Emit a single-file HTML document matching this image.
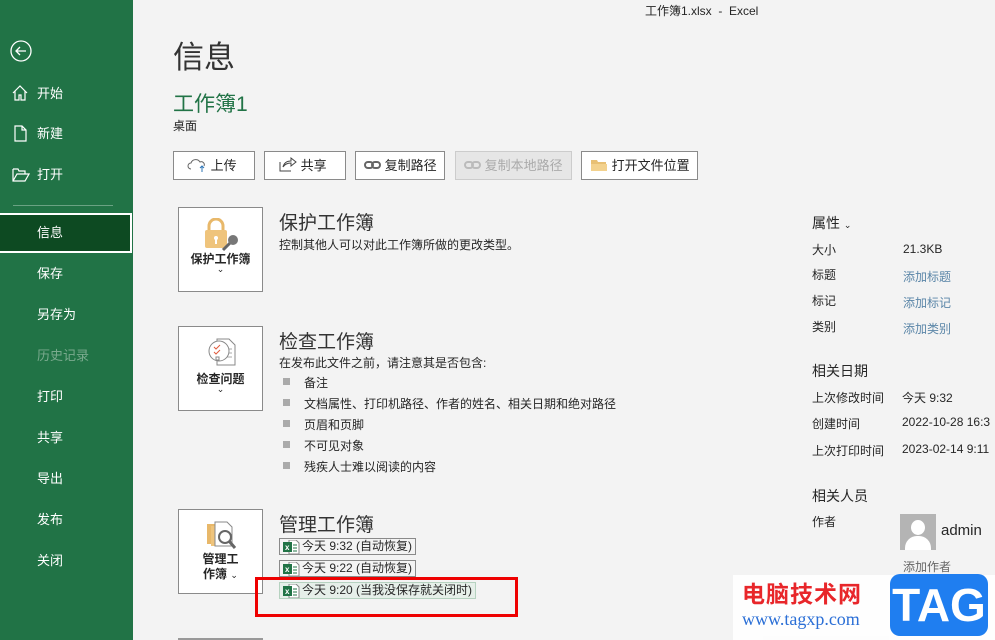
<!DOCTYPE html>
<html><head><meta charset="utf-8"><style>
*{margin:0;padding:0;box-sizing:border-box}
body{width:995px;height:640px;overflow:hidden;background:#f3f3f3;font-family:"Liberation Sans","Noto Sans CJK SC",sans-serif;color:#262626;position:relative}
.side{position:absolute;left:0;top:0;width:133px;height:640px;background:#217346;color:#fff}
.side .it{position:absolute;left:37px;font-size:13px;margin-top:-3px}
.side svg{position:absolute}
.sel{position:absolute;left:0;top:213px;width:132px;height:40px;background:#0d4a22;border:2px solid #fff;border-left:none}
.abs{position:absolute}
.btn{position:absolute;top:151px;height:29px;border:1px solid #8a8a8a;background:#fff;font-size:13px;line-height:27px}
.card{position:absolute;left:178px;width:85px;height:85px;border:1px solid #8a8a8a;background:#fff;text-align:center;font-size:12px;font-weight:bold}
.h2{position:absolute;left:279px;font-size:19px;color:#333}
.t{position:absolute;font-size:12px}
.bul{position:absolute;left:283px;width:7px;height:7px;background:#aaa}
.ver{position:absolute;left:279px;height:17px;border:1px solid #8a8a8a;font-size:12px;line-height:15px;padding-left:22px;padding-right:3px}
.xl{position:absolute;left:2px;top:1px}
.lk{color:#5b86a8}
</style></head><body>
<div class="side">
<svg style="left:10px;top:40px" width="22" height="22" viewBox="0 0 22 22"><circle cx="11" cy="11" r="10" fill="none" stroke="#fff" stroke-width="1.3"/><path d="M16 11H6M10 7l-4 4 4 4" fill="none" stroke="#fff" stroke-width="1.3"/></svg>
<svg style="left:12px;top:85px" width="16" height="16" viewBox="0 0 16 16"><path d="M1 8L8 1l7 7M3 6v9h4v-5h2v5h4V6" fill="none" stroke="#fff" stroke-width="1.2"/></svg>
<div class="it" style="top:86px">开始</div>
<svg style="left:14px;top:125px" width="13" height="17" viewBox="0 0 13 17"><path d="M1 1h7l4 4v11H1z M8 1v4h4" fill="none" stroke="#fff" stroke-width="1.2"/></svg>
<div class="it" style="top:126px">新建</div>
<svg style="left:12px;top:168px" width="18" height="14" viewBox="0 0 18 14"><path d="M1 1h5l1 2h6v3 M1 1v12h12l4-7H5L1 13" fill="none" stroke="#fff" stroke-width="1.2"/></svg>
<div class="it" style="top:167px">打开</div>
<div class="abs" style="left:13px;top:205px;width:100px;height:1px;background:#6aa283"></div>
<div class="sel"></div>
<div class="it" style="top:225px">信息</div>
<div class="it" style="top:266px">保存</div>
<div class="it" style="top:307px">另存为</div>
<div class="it" style="top:348px;color:#7aaa8e">历史记录</div>
<div class="it" style="top:389px">打印</div>
<div class="it" style="top:430px">共享</div>
<div class="it" style="top:471px">导出</div>
<div class="it" style="top:512px">发布</div>
<div class="it" style="top:553px">关闭</div>
</div>
<div class="t" style="left:645px;top:2px;font-size:12px">工作簿1.xlsx &nbsp;-&nbsp; Excel</div>
<div class="abs" style="left:173px;top:32px;font-size:31px;color:#333">信息</div>
<div class="abs" style="left:173px;top:88px;font-size:21px;color:#217346">工作簿1</div>
<div class="t" style="left:173px;top:117px">桌面</div>

<div class="btn" style="left:173px;width:82px;padding-left:13px"><svg width="20" height="14" style="vertical-align:-2px" viewBox="0 0 20 14"><path d="M4 11a3 3 0 010-6 5 5 0 019-1 3 3 0 014 4" fill="none" stroke="#666"/><path d="M15 14V8m-2 2l2-2 2 2" stroke="#2e75b6" fill="none"/></svg> 上传</div>
<div class="btn" style="left:264px;width:82px;padding-left:14px"><svg width="18" height="16" style="vertical-align:-2px" viewBox="0 0 18 16"><path d="M1 6v9h11M4 11c1-4 4-6 8-6V2l5 4-5 4V7c-3 0-6 1-8 4z" fill="none" stroke="#444"/></svg> 共享</div>
<div class="btn" style="left:355px;width:90px;padding-left:8px"><svg width="17" height="10" style="vertical-align:0" viewBox="0 0 17 10"><rect x="1" y="2" width="8" height="6" rx="3" fill="none" stroke="#666" stroke-width="2"/><rect x="8" y="2" width="8" height="6" rx="3" fill="none" stroke="#666" stroke-width="2"/></svg> 复制路径</div>
<div class="btn" style="left:455px;width:117px;padding-left:8px;background:#e6e6e6;border-color:#ccc;color:#aaa"><svg width="17" height="10" viewBox="0 0 17 10"><rect x="1" y="2" width="8" height="6" rx="3" fill="none" stroke="#bbb" stroke-width="2"/><rect x="8" y="2" width="8" height="6" rx="3" fill="none" stroke="#bbb" stroke-width="2"/></svg> 复制本地路径</div>
<div class="btn" style="left:581px;width:117px;padding-left:8px"><svg width="18" height="14" style="vertical-align:-2px" viewBox="0 0 18 14"><path d="M1 2h6l1 2h8v9H1z" fill="#e8c074"/><path d="M1 6h16v7H1z" fill="#f3d28e"/></svg> 打开文件位置</div>

<div class="card" style="top:207px"><svg style="position:absolute;left:24px;top:10px" width="38" height="36" viewBox="0 0 38 36"><path d="M6 12V8a7 7 0 0114 0v4" fill="none" stroke="#e8b86a" stroke-width="3"/><rect x="2" y="12" width="22" height="18" rx="2" fill="#efc47c"/><circle cx="13" cy="20" r="2" fill="#fff"/><rect x="12" y="20" width="2" height="6" fill="#fff"/><path d="M20 32l8-8" stroke="#666" stroke-width="3"/><circle cx="30" cy="22" r="5" fill="#777"/></svg><div class="abs" style="left:0;width:83px;top:42px">保护工作簿</div><div class="abs" style="left:0;width:83px;top:56px;font-size:9px;font-weight:normal">⌄</div></div>
<div class="h2" style="top:208px">保护工作簿</div>
<div class="t" style="left:279px;top:236px">控制其他人可以对此工作簿所做的更改类型。</div>

<div class="card" style="top:326px"><svg style="position:absolute;left:26px;top:10px" width="34" height="30" viewBox="0 0 34 30"><path d="M12 2h12l6 6v20H12z" fill="#fff" stroke="#888"/><path d="M22 12h5M22 16h5M22 20h5" stroke="#aaa"/><circle cx="14" cy="14" r="10" fill="#fff" stroke="#888"/><path d="M9 10l2 2 4-4M9 15l2 2 4-4" stroke="#e05a3c" fill="none"/><rect x="11" y="20" width="3" height="3" fill="none" stroke="#888"/></svg><div class="abs" style="left:0;width:83px;top:43px">检查问题</div><div class="abs" style="left:0;width:83px;top:57px;font-size:9px;font-weight:normal">⌄</div></div>
<div class="h2" style="top:327px">检查工作簿</div>
<div class="t" style="left:279px;top:354px">在发布此文件之前，请注意其是否包含:</div>
<div class="bul" style="top:378px"></div><div class="t" style="left:304px;top:374px">备注</div>
<div class="bul" style="top:399px"></div><div class="t" style="left:304px;top:395px">文档属性、打印机路径、作者的姓名、相关日期和绝对路径</div>
<div class="bul" style="top:420px"></div><div class="t" style="left:304px;top:416px">页眉和页脚</div>
<div class="bul" style="top:441px"></div><div class="t" style="left:304px;top:437px">不可见对象</div>
<div class="bul" style="top:462px"></div><div class="t" style="left:304px;top:458px">残疾人士难以阅读的内容</div>

<div class="card" style="top:509px"><svg style="position:absolute;left:26px;top:10px" width="34" height="32" viewBox="0 0 34 32"><rect x="2" y="4" width="14" height="20" fill="#e8b86a"/><rect x="6" y="6" width="14" height="20" fill="#efc47c"/><path d="M10 2h12l5 5v19H10z" fill="#fff" stroke="#888"/><circle cx="20" cy="17" r="6" fill="#fff" stroke="#666" stroke-width="2"/><path d="M24 21l6 7" stroke="#666" stroke-width="3"/></svg><div class="abs" style="left:0;width:83px;top:42px;line-height:15px">管理工<br>作簿 <span style="font-size:9px;font-weight:normal">⌄</span></div></div>
<div class="h2" style="top:510px">管理工作簿</div>
<div class="ver" style="top:538px"><svg class="xl" width="18" height="14" viewBox="0 0 18 14"><path d="M7 0h7l3 3v11H7z" fill="#fff" stroke="#888"/><path d="M11 5h4M11 8h4M11 11h4" stroke="#217346"/><rect x="1" y="2" width="9" height="10" fill="#217346"/><text x="3" y="10" font-size="8" fill="#fff" font-family="Liberation Sans" font-weight="bold">x</text></svg>今天 9:32 (自动恢复)</div>
<div class="ver" style="top:560px"><svg class="xl" width="18" height="14" viewBox="0 0 18 14"><path d="M7 0h7l3 3v11H7z" fill="#fff" stroke="#888"/><path d="M11 5h4M11 8h4M11 11h4" stroke="#217346"/><rect x="1" y="2" width="9" height="10" fill="#217346"/><text x="3" y="10" font-size="8" fill="#fff" font-family="Liberation Sans" font-weight="bold">x</text></svg>今天 9:22 (自动恢复)</div>
<div class="ver" style="top:582px;background:#e6efe9;border-color:#b6d2c0"><svg class="xl" width="18" height="14" viewBox="0 0 18 14"><path d="M7 0h7l3 3v11H7z" fill="#fff" stroke="#888"/><path d="M11 5h4M11 8h4M11 11h4" stroke="#217346"/><rect x="1" y="2" width="9" height="10" fill="#217346"/><text x="3" y="10" font-size="8" fill="#fff" font-family="Liberation Sans" font-weight="bold">x</text></svg>今天 9:20 (当我没保存就关闭时)</div>
<div class="abs" style="left:255px;top:577px;width:263px;height:40px;border:3px solid #e00"></div>
<div class="abs" style="left:178px;top:638px;width:85px;height:2px;background:#999"></div>

<div class="t" style="left:812px;top:213px;font-size:14px">属性 <span style="font-size:9px">⌄</span></div>
<div class="t" style="left:812px;top:241px">大小</div><div class="t" style="left:903px;top:242px">21.3KB</div>
<div class="t" style="left:812px;top:266px">标题</div><div class="t lk" style="left:903px;top:268px">添加标题</div>
<div class="t" style="left:812px;top:292px">标记</div><div class="t lk" style="left:903px;top:294px">添加标记</div>
<div class="t" style="left:812px;top:318px">类别</div><div class="t lk" style="left:903px;top:320px">添加类别</div>
<div class="t" style="left:812px;top:361px;font-size:14px">相关日期</div>
<div class="t" style="left:812px;top:389px">上次修改时间</div><div class="t" style="left:902px;top:389px">今天 9:32</div>
<div class="t" style="left:812px;top:415px">创建时间</div><div class="t" style="left:902px;top:415px;white-space:nowrap">2022-10-28 16:3</div>
<div class="t" style="left:812px;top:442px">上次打印时间</div><div class="t" style="left:902px;top:442px;white-space:nowrap">2023-02-14 9:11</div>
<div class="t" style="left:812px;top:486px;font-size:14px">相关人员</div>
<div class="t" style="left:812px;top:513px">作者</div>
<div class="abs" style="left:900px;top:514px;width:36px;height:36px;background:#b4b4b4;overflow:hidden"><div class="abs" style="left:11px;top:6px;width:14px;height:15px;border-radius:50%;background:#fff"></div><div class="abs" style="left:5px;top:22px;width:26px;height:20px;border-radius:12px 12px 0 0;background:#fff"></div></div>
<div class="t" style="left:941px;top:522px;font-size:15px">admin</div>
<div class="t" style="left:903px;top:558px;color:#666">添加作者</div>

<div class="abs" style="left:733px;top:575px;width:262px;height:65px;background:rgba(255,255,255,0.85)"></div>
<div class="abs" style="left:742px;top:575px;font-size:23px;font-weight:bold;color:#e8262a;letter-spacing:1px">电脑技术网</div>
<div class="abs" style="left:742px;top:609px;font-size:18px;color:#2b6fd6;font-family:'Liberation Serif',serif">www.tagxp.com</div>
<div class="abs" style="left:890px;top:574px;width:98px;height:62px;background:#1f7ef0;border-radius:10px;color:#fff;font-size:46px;font-weight:bold;text-align:center;line-height:62px">TAG</div>
</body></html>
